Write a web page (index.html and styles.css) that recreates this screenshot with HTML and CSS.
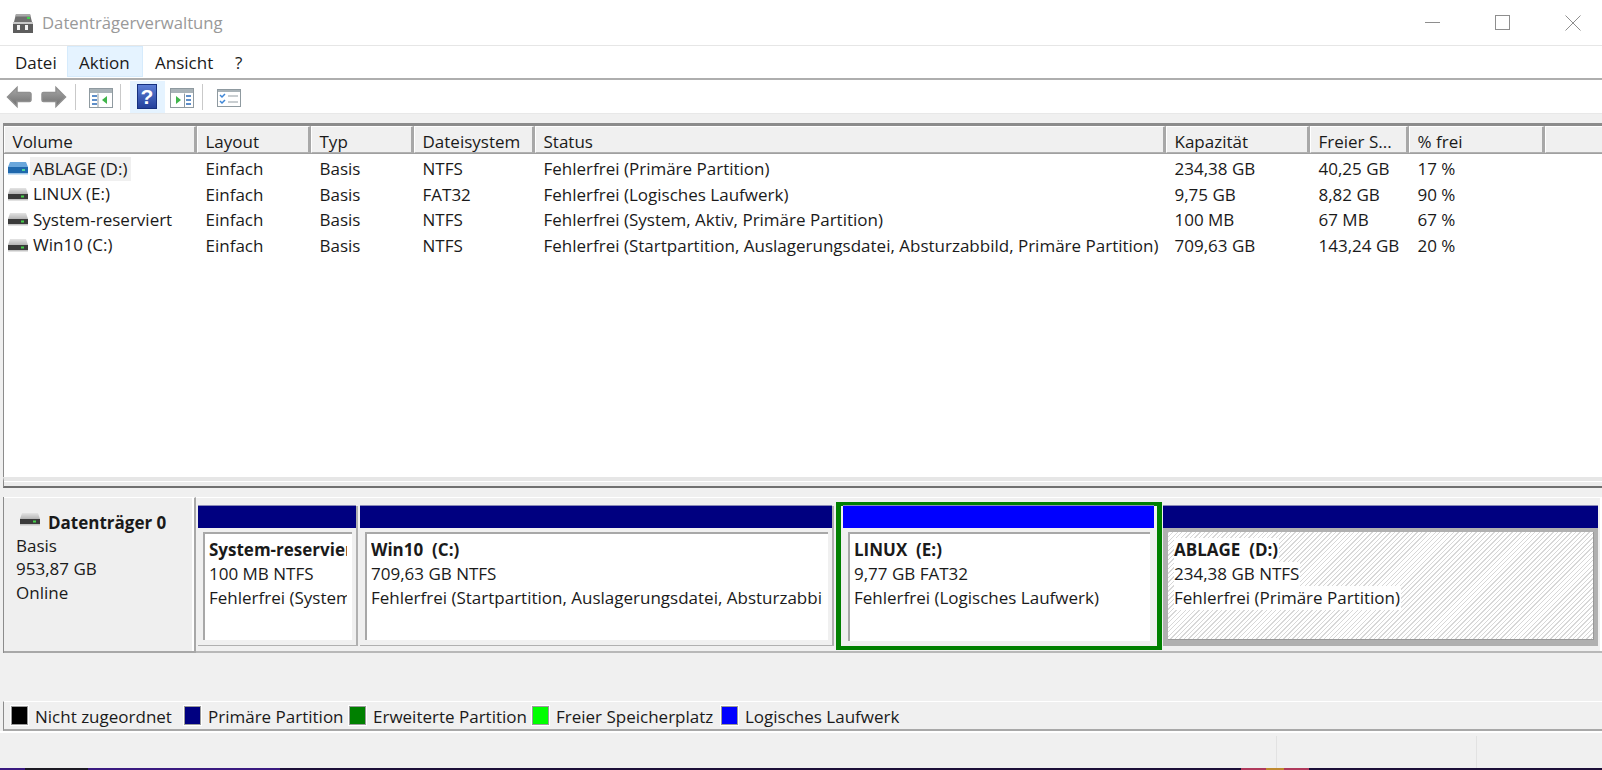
FILE: index.html
```html
<!DOCTYPE html>
<html lang="de">
<head>
<meta charset="utf-8">
<title>Datenträgerverwaltung</title>
<link rel="stylesheet" href="styles.css">
</head>
<body>
<svg class="defs" width="0" height="0" aria-hidden="true">
  <defs>
    <linearGradient id="gTop" x1="0" y1="0" x2="0" y2="1"><stop offset="0" stop-color="#e4e4e4"/><stop offset="1" stop-color="#b4b4b4"/></linearGradient>
    <linearGradient id="gArrow" x1="0" y1="0" x2="0" y2="1"><stop offset="0" stop-color="#a8a8a8"/><stop offset="1" stop-color="#6e6e6e"/></linearGradient>
    <linearGradient id="gHelp" x1="0" y1="0" x2="0" y2="1"><stop offset="0" stop-color="#5d7fd6"/><stop offset="1" stop-color="#223f9a"/></linearGradient>
    <symbol id="drive" viewBox="0 0 22 15">
      <path d="M3 1h16l2 6H1z" fill="url(#gTop)"/>
      <rect x="1" y="7" width="20" height="5" fill="#3a3a3a"/>
      <rect x="1" y="12" width="20" height="1.5" fill="#c4c4c4"/>
      <rect x="14" y="8.5" width="3" height="2" fill="#45d04a"/>
    </symbol>
    <symbol id="drive-blue" viewBox="0 0 22 15">
      <path d="M3 1h16l2 5H1z" fill="#6aa7dc"/>
      <rect x="1" y="6" width="20" height="6" fill="#1f68ad"/>
      <rect x="1" y="12" width="20" height="1.5" fill="#9cc4e6"/>
      <rect x="15" y="8" width="3" height="2" fill="#4bd69a"/>
    </symbol>
    <symbol id="back" viewBox="0 0 26 24">
      <path d="M1.500 12 11 2.500v5h12.500a1.500 1.500 0 0 1 1.500 1.500v6a1.500 1.500 0 0 1-1.500 1.500H11v5z" fill="url(#gArrow)" stroke="#909090" stroke-width="1.500"/>
    </symbol>
    <symbol id="forward" viewBox="0 0 26 24">
      <path d="M24.500 12 15 2.500v5H2.500A1.500 1.500 0 0 0 1 9v6a1.500 1.500 0 0 0 1.500 1.500H15v5z" fill="url(#gArrow)" stroke="#909090" stroke-width="1.500"/>
    </symbol>
  </defs>
</svg>
<div class="window">
  <header class="titlebar">
    <svg class="app-icon" viewBox="0 0 22 22" width="22" height="22">
      <path d="M4 2h14l2 8H2z" fill="#6f6f6f"/>
      <path d="M4 2h14l.6 2.5H3.400z" fill="#a8a8a8"/>
      <rect x="15" y="5" width="3" height="2" fill="#3fd24b"/>
      <rect x="1" y="10" width="20" height="11" fill="#5d5d5d"/>
      <rect x="1" y="10" width="20" height="2" fill="#c9c9c9"/>
      <rect x="5" y="13" width="3" height="5" fill="#f2f2f2"/>
      <rect x="13" y="13" width="3" height="5" fill="#f2f2f2"/>
    </svg>
    <span class="app-title">Datenträgerverwaltung</span>
    <div class="winctl">
      <svg viewBox="0 0 16 16" width="16" height="16"><path d="M0 7.500h15" stroke="#8e8e8e" fill="none"/></svg>
      <svg viewBox="0 0 16 16" width="16" height="16"><rect x=".5" y=".5" width="14" height="14" stroke="#8e8e8e" fill="none"/></svg>
      <svg viewBox="0 0 16 16" width="16" height="16"><path d="M.5.5l15 15M15.500.5l-15 15" stroke="#8e8e8e" fill="none"/></svg>
    </div>
  </header>
  <nav class="menubar">
    <span class="menu-item m-datei">Datei</span>
    <span class="menu-item menu-active">Aktion</span>
    <span class="menu-item m-ansicht">Ansicht</span>
    <span class="menu-item m-help">?</span>
  </nav>
  <div class="toolbar">
    <svg class="tb-back" width="26" height="24"><use href="#back"/></svg>
    <svg class="tb-forward" width="26" height="24"><use href="#forward"/></svg>
    <i class="tb-sep"></i>
    <svg class="tb-icon tb-a" viewBox="0 0 24 20" width="24" height="20">
      <rect x=".5" y=".5" width="23" height="19" fill="#fff" stroke="#8f9aa0"/>
      <rect x="1" y="1" width="22" height="4" fill="#a9b3b8"/>
      <path d="M3 7h5v2H3zM3 11h5v2H3zM3 15h5v2H3z" fill="#5f8fc9"/>
      <path d="M9 5.500v14" stroke="#8f9aa0"/>
      <path d="M18 8v8l-5-4z" fill="#3fb54a"/>
    </svg>
    <i class="tb-sep tb-sep2"></i>
    <span class="tb-active">
      <svg viewBox="0 0 20 25" width="20" height="25">
        <rect x=".5" y=".5" width="19" height="24" fill="url(#gHelp)" stroke="#16307e"/>
        <text x="10" y="20" class="help-mark">?</text>
      </svg>
    </span>
    <svg class="tb-icon tb-b" viewBox="0 0 24 20" width="24" height="20">
      <rect x=".5" y=".5" width="23" height="19" fill="#fff" stroke="#8f9aa0"/>
      <rect x="1" y="1" width="22" height="4" fill="#a9b3b8"/>
      <path d="M16 7h5v2h-5zM16 11h5v2h-5zM16 15h5v2h-5z" fill="#5f8fc9"/>
      <path d="M14.500 5.500v14" stroke="#8f9aa0"/>
      <path d="M6 8v8l5-4z" fill="#3fb54a"/>
    </svg>
    <i class="tb-sep tb-sep3"></i>
    <svg class="tb-icon tb-c" viewBox="0 0 24 20" width="24" height="20">
      <rect x=".5" y="1.500" width="23" height="17" fill="#fff" stroke="#8f9aa0"/>
      <rect x="1" y="2" width="22" height="2" fill="#a9b3b8"/>
      <path d="M3 7l2 2 3-3M3 13l2 2 3-3" stroke="#3f86d6" stroke-width="1.500" fill="none"/>
      <path d="M11 8h10M11 14h10" stroke="#b8bec2" stroke-width="1.500"/>
    </svg>
  </div>
  <main class="main">
    <section class="volumes">
      <div class="head row-grid">
        <div class="hcell">Volume</div>
        <div class="hcell">Layout</div>
        <div class="hcell">Typ</div>
        <div class="hcell">Dateisystem</div>
        <div class="hcell">Status</div>
        <div class="hcell">Kapazität</div>
        <div class="hcell">Freier S...</div>
        <div class="hcell">% frei</div>
        <div class="hcell"></div>
      </div>
      <div class="rows">
        <div class="row row-grid">
          <div class="cell vol"><svg class="drive-icon" width="22" height="15"><use href="#drive-blue"/></svg><span class="selected">ABLAGE (D:)</span></div>
          <div class="cell">Einfach</div><div class="cell">Basis</div><div class="cell">NTFS</div>
          <div class="cell">Fehlerfrei (Primäre Partition)</div><div class="cell">234,38 GB</div><div class="cell">40,25 GB</div><div class="cell">17 %</div>
        </div>
        <div class="row row-grid">
          <div class="cell vol"><svg class="drive-icon" width="22" height="15"><use href="#drive"/></svg><span>LINUX (E:)</span></div>
          <div class="cell">Einfach</div><div class="cell">Basis</div><div class="cell">FAT32</div>
          <div class="cell">Fehlerfrei (Logisches Laufwerk)</div><div class="cell">9,75 GB</div><div class="cell">8,82 GB</div><div class="cell">90 %</div>
        </div>
        <div class="row row-grid">
          <div class="cell vol"><svg class="drive-icon" width="22" height="15"><use href="#drive"/></svg><span>System-reserviert</span></div>
          <div class="cell">Einfach</div><div class="cell">Basis</div><div class="cell">NTFS</div>
          <div class="cell">Fehlerfrei (System, Aktiv, Primäre Partition)</div><div class="cell">100 MB</div><div class="cell">67 MB</div><div class="cell">67 %</div>
        </div>
        <div class="row row-grid">
          <div class="cell vol"><svg class="drive-icon" width="22" height="15"><use href="#drive"/></svg><span>Win10 (C:)</span></div>
          <div class="cell">Einfach</div><div class="cell">Basis</div><div class="cell">NTFS</div>
          <div class="cell">Fehlerfrei (Startpartition, Auslagerungsdatei, Absturzabbild, Primäre Partition)</div><div class="cell">709,63 GB</div><div class="cell">143,24 GB</div><div class="cell">20 %</div>
        </div>
      </div>
    </section>
    <div class="sash"></div>
    <section class="disk-row">
      <div class="disk-label">
        <div class="disk-name"><svg class="disk-icon" width="22" height="15"><use href="#drive"/></svg><b>Datenträger 0</b></div>
        <div>Basis</div>
        <div>953,87 GB</div>
        <div>Online</div>
      </div>
      <div class="parts">
        <div class="part part-sys">
          <div class="bar bar-navy"></div>
          <div class="body"><div class="box"><div class="clip"><b>System-reserviert</b><br>100 MB NTFS<br>Fehlerfrei (System</div></div></div>
        </div>
        <div class="part part-win">
          <div class="bar bar-navy"></div>
          <div class="body"><div class="box"><div class="clip"><b>Win10&nbsp; (C:)</b><br>709,63 GB NTFS<br>Fehlerfrei (Startpartition, Auslagerungsdatei, Absturzabbild</div></div></div>
        </div>
        <div class="part-linux">
          <div class="bar bar-blue"></div>
          <div class="body"><div class="box"><div class="clip"><b>LINUX&nbsp; (E:)</b><br>9,77 GB FAT32<br>Fehlerfrei (Logisches Laufwerk)</div></div></div>
        </div>
        <div class="part part-ablage">
          <div class="bar bar-navy"></div>
          <div class="body body-sel"><div class="hatch">
            <div class="hatch-line"><b>ABLAGE&nbsp; (D:)</b></div>
            <div class="hatch-line"><span>234,38 GB NTFS</span></div>
            <div class="hatch-line"><span>Fehlerfrei (Primäre Partition)</span></div>
          </div></div>
        </div>
      </div>
    </section>
    <div class="legend">
      <i class="sw sw-black"></i><span class="lg-text lg1">Nicht zugeordnet</span>
      <i class="sw sw-navy"></i><span class="lg-text lg2">Primäre Partition</span>
      <i class="sw sw-green"></i><span class="lg-text lg3">Erweiterte Partition</span>
      <i class="sw sw-lime"></i><span class="lg-text lg4">Freier Speicherplatz</span>
      <i class="sw sw-blue"></i><span class="lg-text">Logisches Laufwerk</span>
    </div>
  </main>
  <footer class="statusbar">
    <div class="st st1"></div><div class="st st2"></div><div class="st st3"></div>
  </footer>
  <div class="desktop"></div>
</div>
</body>
</html>
```
FILE: styles.css
```css
* { box-sizing: border-box; }
html, body { margin: 0; height: 770px; overflow: hidden; background: #fff; }
body { font-family: "Open Sans", "Noto Sans", sans-serif; font-size: 17px; color: #1a1a1a; }
.defs { display: block; height: 0; }
.window { display: flex; flex-direction: column; height: 770px; }

.titlebar { flex: 0 0 46px; display: flex; align-items: center; border-bottom: 1px solid #e6e6e6; padding-left: 12px; }
.app-icon { margin-right: 8px; }
.app-title { font-size: 16.700px; color: #999; }
.winctl { margin-left: auto; display: flex; gap: 54px; padding-right: 21px; }

.menubar { flex: 0 0 34px; display: flex; padding-bottom: 1px; border-bottom: 2px solid #aeaeae; }
.menu-item { padding-top: 4px; line-height: 26px; flex: none; }
.m-datei { width: 67px; padding-left: 15px; }
.menu-active { width: 76px; background: #e5f3ff; border: 1px solid #d6ebfc; padding-top: 3px; padding-left: 11px; }
.m-ansicht { width: 81px; padding-left: 12px; }
.m-help { padding-left: 11px; }

.toolbar { flex: 0 0 34px; display: flex; align-items: center; background: #fff; border-bottom: 1px solid #e8e8e8; padding-left: 6px; }
.tb-forward { margin-left: 9px; }
.tb-sep { width: 1px; height: 26px; background: #c9c9c9; margin-left: 8px; }
.tb-icon { margin-top: 2px; }
.tb-a { margin-left: 13px; }
.tb-sep2 { margin-left: 7px; }
.tb-active { width: 35px; height: 32px; margin-left: 9px; background: #e5f3ff; display: flex; align-items: center; justify-content: center; padding-right: 2px; }
.help-mark { font-family: "Liberation Sans", sans-serif; font-weight: 700; font-size: 21px; fill: #fff; text-anchor: middle; }
.tb-b { margin-left: 5px; }
.tb-sep3 { margin-left: 8px; }
.tb-c { margin-left: 14px; }

.main { flex: 0 0 608px; display: flex; flex-direction: column; background: #f0f0f0; padding-top: 9px; }
.volumes { height: 354px; margin-left: 3px; border-left: 1px solid #8c8c8c; border-top: 3px solid #8c8c8c; background: #fff; display: flex; flex-direction: column; }
.row-grid { display: grid; grid-template-columns: 193px 114px 103px 121px 631px 144px 99px 136px 1fr; }
.head { height: 28px; flex: none; border-bottom: 1px solid #a0a0a0; }
.hcell { background: #f0f0f0; border-right: 3px solid #a8a8a8; border-left: 1px solid #fff; border-top: 1px solid #fff; border-bottom: 1px solid #b0b0b0; padding: 3px 0 0 7.500px; line-height: 24px; white-space: nowrap; overflow: hidden; }
.head .hcell:last-child { border-right: 0; }
.rows { padding-top: 2px; }
.row { height: 25.500px; line-height: 25px; }
.cell { padding-left: 8.500px; white-space: nowrap; }
.vol { padding-left: 3px; display: flex; align-items: center; }
.drive-icon { flex: none; margin-right: 1px; }
.vol span { padding: 0 4px 0 3px; line-height: 24px; }
.vol .selected { background: #f0f0f0; }

.sash { height: 11px; margin-left: 3px; border-left: 1px solid #8c8c8c; background: #ececec; border-top: 4px solid #e6e6e6; border-bottom: 2px solid #707070; box-shadow: inset 0 1px 0 #fff; flex: none; }

.disk-row { display: flex; margin-top: 9px; margin-left: 3px; border-left: 1px solid #8c8c8c; height: 156px; flex: none; }
.disk-label { flex: 0 0 192px; background: #efefef; border-bottom: 2px solid #a8a8a8; border-right: 2px solid #a8a8a8; box-shadow: inset -2px 0 0 #fff; border-top: 1px solid #fff; padding: 13px 0 0 12px; line-height: 23.700px; }
.disk-name { display: flex; align-items: center; margin-bottom: -1px; }
.disk-icon { margin: -7px 7px 0 3px; flex: none; }
.parts { flex: 1; display: flex; align-items: stretch; border-top: 1px solid #fff; border-bottom: 2px solid #b8b8b8; padding: 8px 0 5px 2px; min-width: 0; box-shadow: inset -2px 0 0 #fff; }
.part { display: flex; flex-direction: column; flex: none; }
.part-sys { width: 160px; border-right: 2px solid #b0b0b0; border-bottom: 1px solid #b0b0b0; margin-right: 2px; }
.part-win { width: 474px; border-right: 2px solid #b0b0b0; border-bottom: 1px solid #b0b0b0; margin-right: 2px; }
.part-ablage { width: 435px; margin-left: 1px; }
.part-linux { width: 326px; flex: none; display: flex; flex-direction: column; margin: -4px 0 -4px; border: 5px solid #008000; border-width: 4px 5px; padding: 0 3px 0 2px; background: #f0f0f0; }
.bar { height: 22px; flex: none; box-shadow: 0 -1px 0 #8a8ab8; }
.bar-navy { background: #000080; }
.bar-blue { background: #0000ff; }
.body { flex: 1; padding: 4px 4px 5px 5px; display: flex; background: #f0f0f0; min-height: 0; }
.box { flex: 1; min-width: 0; background: #fff; border-top: 2px solid #a8a8a8; border-left: 2px solid #a8a8a8; padding: 4px 5px 0 4px; line-height: 24px; }
.clip { overflow: hidden; white-space: nowrap; height: 100%; }
.body-sel { background: #b0b0b0; padding: 4px 4px 6px 5px; }
.hatch { flex: 1; background: repeating-linear-gradient(135deg, #d8d8d8 0 1px, #fff 1px 3.200px); border-bottom: 1px solid #999; border-right: 1px solid #999; padding: 6px 0 0 6px; line-height: 24px; }
.hatch-line { height: 24px; }
.hatch-line b, .hatch-line span { background: #fff; display: inline-block; height: 24px; padding-right: 1px; }

.legend { margin-top: 48px; flex: none; margin-left: 3px; border-left: 1px solid #8c8c8c; border-top: 1px solid #fff; border-bottom: 2px solid #a8a8a8; height: 30px; display: flex; align-items: center; padding-left: 7px; }
.sw { width: 17px; height: 19px; flex: none; border: 1px solid #9a9a9a; outline: 1px solid #fff; outline-offset: 0; margin-right: 7px; }
.sw-black { background: #000; }
.sw-navy { background: #000080; }
.sw-green { background: #008000; }
.sw-lime { background: #00ff00; }
.sw-blue { background: #0000ff; }
.lg-text { white-space: nowrap; padding-top: 1px; }
.lg1 { width: 149px; }
.lg2 { width: 141px; }
.lg3 { width: 159px; }
.lg4 { width: 165px; }

.statusbar { flex: 1; display: flex; background: #f0f0f0; border-top: 2px solid #fff; padding-top: 3px; }
.st1 { width: 1277px; border-right: 1px solid #e2e2e2; }
.st2 { width: 200px; border-right: 1px solid #e2e2e2; }
.st3 { flex: 1; }
.desktop { flex: 0 0 2px; background: linear-gradient(90deg, #3a1a80 0 25px, #1c1a24 25px 88px, #3a1a80 88px 280px, #1c0f38 280px 1241px, #b03a5c 1241px 1266px, #c08a30 1266px 1284px, #b03a5c 1284px 1309px, #1c0f38 1309px); }
```
